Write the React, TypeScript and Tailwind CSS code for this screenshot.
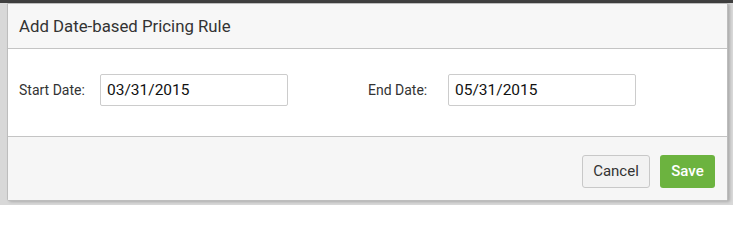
import React from "react";

const font = { fontFamily: "Roboto, 'Liberation Sans', sans-serif" };

function DateField({ label, value, labelW }: { label: string; value: string; labelW: string }) {
  return (
    <div className="flex items-center">
      <span className={`text-[14px] text-[#333] ${labelW}`}>{label}</span>
      <input
        readOnly
        value={value}
        className="w-[188px] h-[32px] border border-[#ccc] rounded-[2px] px-[6px] text-[15.5px] text-[#111] bg-white outline-none"
      />
    </div>
  );
}

export default function App() {
  return (
    <div style={font} className="w-[733px] h-[205px] overflow-hidden bg-[#d8d8d8] flex flex-col">
      <div className="h-[3px] bg-[#3f3f3f] shrink-0" />
      <div className="flex flex-1 pl-[7px] pr-[5px] pb-[4px] bg-[#d8d8d8]">
        <div className="w-[721px] h-[198px] bg-white border border-[#bdbdbd] rounded-b-[2px] flex flex-col shadow-[2px_1px_3px_rgba(0,0,0,0.2)]">
          <div className="h-[45px] bg-[#f7f7f7] border-b border-[#c4c4c4] flex items-center px-[11px] pt-[1px]">
            <h2 className="text-[16.8px] text-[#333]">Add Date-based Pricing Rule</h2>
          </div>
          <div className="h-[88px] bg-white flex items-start pt-[25px] px-[11px] border-b border-[#c4c4c4]">
            <DateField label="Start Date:" value="03/31/2015" labelW="w-[81px]" />
            <div className="w-[80px]" />
            <DateField label="End Date:" value="05/31/2015" labelW="w-[80px]" />
          </div>
          <div className="flex-1 bg-[#f6f6f6] flex items-start justify-end gap-[10px] pr-[12px] pt-[18px]">
            <button className="h-[33px] w-[68px] border border-[#c8c8c8] rounded-[3px] bg-[#f2f2f2] text-[15px] text-[#333]">
              Cancel
            </button>
            <button className="h-[33px] w-[55px] rounded-[3px] bg-[#6cb33f] text-[15px] font-medium text-white">
              Save
            </button>
          </div>
        </div>
      </div>
    </div>
  );
}
